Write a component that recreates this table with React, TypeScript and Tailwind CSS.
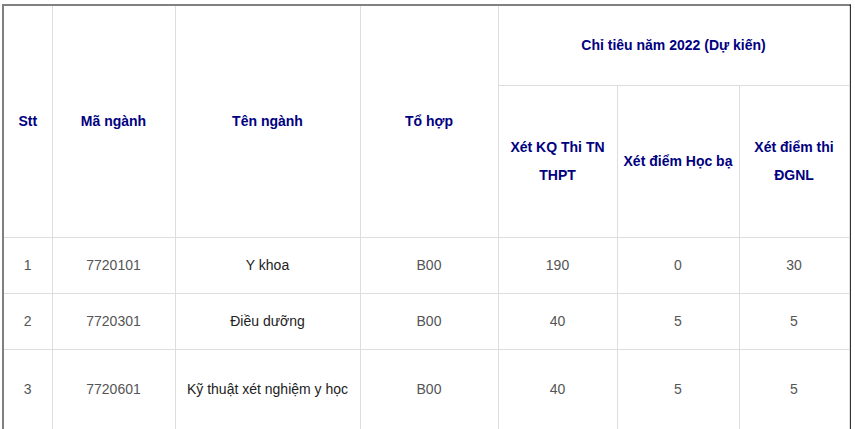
import React from "react";

const th = "border border-[#dddddd] text-center align-middle font-bold text-[#000080] px-1";
const td = "border border-[#dddddd] text-center align-middle px-2";

const rows = [
  ["1", "7720101", "Y khoa", "B00", "190", "0", "30", "h-[56px]"],
  ["2", "7720301", "Điều dưỡng", "B00", "40", "5", "5", "h-[56px]"],
  ["3", "7720601", "Kỹ thuật xét nghiệm y học", "B00", "40", "5", "5", "h-[80px]"],
];

export default function App() {
  return (
    <div className="w-[855px] h-[429px] overflow-hidden bg-white" style={{ fontFamily: '"Liberation Sans", Arial, sans-serif' }}>
      <div className="ml-[2px] mt-[4px] w-[849px] border-l-2 border-t-2 border-l-[#808080] border-t-[#808080] border-r-2 border-r-[#333333]">
        <table className="w-[845px] table-fixed border-collapse text-[14px] leading-[28px]">
          <colgroup>
            <col className="w-[48px]" />
            <col className="w-[123px]" />
            <col className="w-[185px]" />
            <col className="w-[138px]" />
            <col className="w-[119px]" />
            <col className="w-[122px]" />
            <col className="w-[110px]" />
          </colgroup>
          <thead>
            <tr className="h-[79px]">
              <th rowSpan={2} className={th + " border-l-0 border-t-0"}>Stt</th>
              <th rowSpan={2} className={th + " border-t-0"}>Mã ngành</th>
              <th rowSpan={2} className={th + " border-t-0"}>Tên ngành</th>
              <th rowSpan={2} className={th + " border-t-0"}>Tổ hợp</th>
              <th colSpan={3} className={th + " border-t-0"}>Chỉ tiêu năm 2022 (Dự kiến)</th>
            </tr>
            <tr className="h-[152px]">
              <th className={th}>Xét KQ Thi TN THPT</th>
              <th className={th + " whitespace-nowrap"}>Xét điểm Học bạ</th>
              <th className={th}>Xét điểm thi ĐGNL</th>
            </tr>
          </thead>
          <tbody>
            {rows.map((r) => (
              <tr key={r[0]} className={r[7]}>
                <td className={td + " border-l-0 text-[#555555]"}>{r[0]}</td>
                <td className={td + " text-[#555555]"}>{r[1]}</td>
                <td className={td + " text-[#222222]"}>{r[2]}</td>
                <td className={td + " text-[#555555]"}>{r[3]}</td>
                <td className={td + " text-[#555555]"}>{r[4]}</td>
                <td className={td + " text-[#555555]"}>{r[5]}</td>
                <td className={td + " text-[#555555]"}>{r[6]}</td>
              </tr>
            ))}
          </tbody>
        </table>
      </div>
    </div>
  );
}
